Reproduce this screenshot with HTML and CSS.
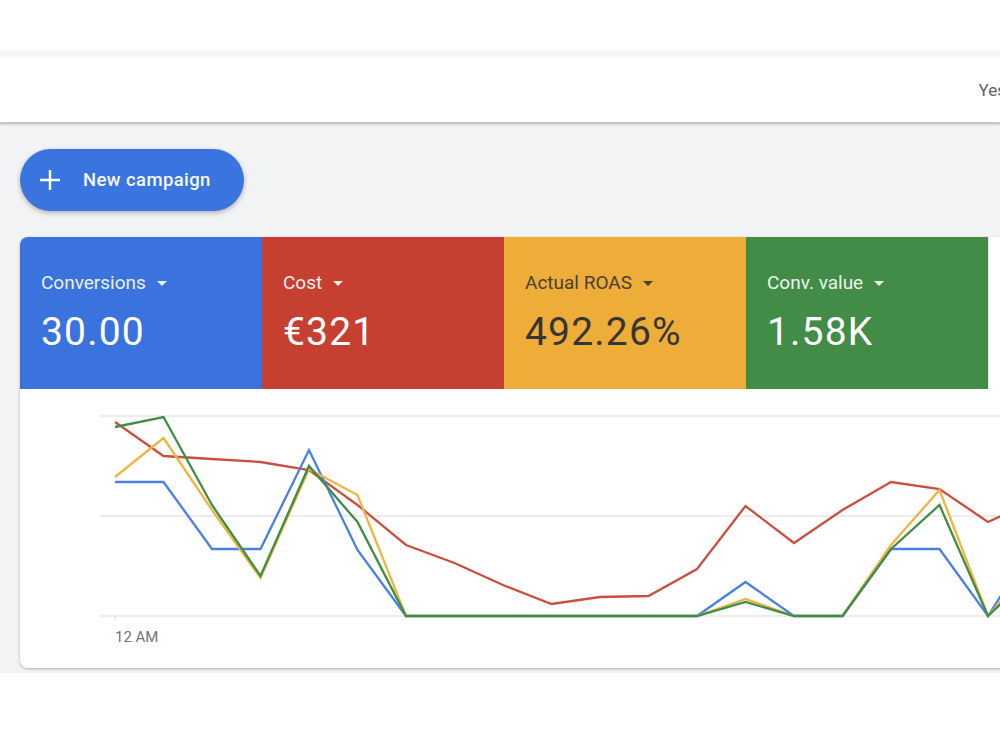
FILE: index.html
```html
<!DOCTYPE html>
<html lang="en">
<head>
<meta charset="utf-8">
<title>Overview</title>
<link rel="stylesheet" href="styles.css">
</head>
<body>
<div class="page">
  <div class="topgap"></div>
  <div class="band"></div>
  <header class="header">
    <span class="date">Yesterday</span>
  </header>
  <main class="main">
    <button class="new-btn" type="button">
      <svg class="plus" width="22" height="22" viewBox="0 0 22 22"><path d="M11 1v20M1 11h20" stroke="#fff" stroke-width="2.4" fill="none"/></svg>
      <span>New campaign</span>
    </button>
    <section class="card">
      <div class="tiles">
        <div class="tile blue">
          <div class="label">Conversions <span class="caret"></span></div>
          <div class="value">30.00</div>
        </div>
        <div class="tile red">
          <div class="label">Cost <span class="caret"></span></div>
          <div class="value">€321</div>
        </div>
        <div class="tile yellow">
          <div class="label">Actual ROAS <span class="caret"></span></div>
          <div class="value">492.26%</div>
        </div>
        <div class="tile green">
          <div class="label">Conv. value <span class="caret"></span></div>
          <div class="value">1.58K</div>
        </div>
        <div class="tile empty"></div>
      </div>
      <div class="chart">
        <svg width="1210" height="279" viewBox="20 389 1210 279">
          <g class="grid">
            <line x1="100" y1="416" x2="1230" y2="416"/>
            <line x1="100" y1="516" x2="1230" y2="516"/>
            <line x1="100" y1="616" x2="1230" y2="616"/>
            <line x1="115" y1="616" x2="115" y2="621"/>
          </g>
          <text class="axis" x="115" y="642">12 AM</text>
          <polyline class="ln red-ln" points="115,422 163.5,456 212,459 260.5,462 309,470 357.5,505 406,545 454.5,563 503,585 551.5,604 600,597 648.5,596 697,569 745.5,506 794,543 842.5,510 891,482 939.5,489 988,522 1036.5,500"/>
          <polyline class="ln blue-ln" points="115,482 163.5,482 212,549 260.5,549 309,450 357.5,550 406,616 454.5,616 503,616 551.5,616 600,616 648.5,616 697,616 745.5,582 794,616 842.5,616 891,549 939.5,549 988,616 1036.5,540"/>
          <polyline class="ln yellow-ln" points="115,477 163.5,438 212,510 260.5,578 309,469 357.5,495 406,616 454.5,616 503,616 551.5,616 600,616 648.5,616 697,616 745.5,599 794,616 842.5,616 891,545 939.5,490 988,616 1036.5,560"/>
          <polyline class="ln green-ln" points="115,427 163.5,417 212,505 260.5,576 309,466 357.5,522 406,616 454.5,616 503,616 551.5,616 600,616 648.5,616 697,616 745.5,602 794,616 842.5,616 891,549 939.5,505 988,616 1036.5,570"/>
        </svg>
      </div>
    </section>
  </main>
</div>
</body>
</html>
```

FILE: styles.css
```css
* { box-sizing: border-box; }

html, body {
  margin: 0;
  padding: 0;
  background: #ffffff;
  font-family: Roboto, "Liberation Sans", Arial, sans-serif;
  overflow: hidden;
}

.page {
  width: 1000px;
  height: 750px;
  overflow: hidden;
  background: #ffffff;
}

.topgap {
  height: 50px;
  background: #ffffff;
}

.band {
  height: 7px;
  background: linear-gradient(180deg, #fbfbfb 0%, #f3f3f3 50%, #fcfcfc 100%);
}

.header {
  height: 67px;
  display: flex;
  align-items: center;
  justify-content: flex-end;
  background: #ffffff;
  border-bottom: 2px solid #c6c6c6;
  box-shadow: 0 1px 2px rgba(0, 0, 0, 0.12);
  position: relative;
  z-index: 1;
}

.date {
  font-size: 17px;
  color: #5f6368;
  white-space: nowrap;
  margin-right: -53px;
}

.main {
  background: #f1f3f4;
  padding: 25px 0 5px 20px;
  width: 1000px;
}

.new-btn {
  display: inline-flex;
  align-items: center;
  gap: 22px;
  height: 62px;
  padding: 0 33px 0 19px;
  border: none;
  border-radius: 31px;
  background: #3a74df;
  color: #ffffff;
  font-family: Roboto, "Liberation Sans", Arial, sans-serif;
  font-size: 18.5px;
  font-weight: 500;
  letter-spacing: 0.4px;
  box-shadow: 0 2px 5px rgba(0, 0, 0, 0.28);
}

.new-btn span { opacity: 0.95; }

.plus { display: block; }

.card {
  margin-top: 26px;
  width: 1210px;
  background: #ffffff;
  border-radius: 8px;
  overflow: hidden;
  box-shadow: 0 1px 3px rgba(0, 0, 0, 0.28);
}

.tiles {
  display: flex;
  height: 152px;
}

.tile {
  width: 242px;
  flex: none;
  padding: 34px 0 0 21px;
  color: #ffffff;
}

.tile.blue { background: #3a73de; }
.tile.red { background: #c64031; }
.tile.yellow { background: #eead39; color: #353535; }
.tile.green { background: #428c47; }
.tile.empty { background: #ffffff; border-left: 1px solid #e8e8e8; }

.label {
  display: flex;
  align-items: center;
  gap: 11px;
  height: 24px;
  font-size: 19px;
  line-height: 24px;
  opacity: 0.9;
  white-space: nowrap;
}

.caret {
  width: 0;
  height: 0;
  border-left: 5.5px solid transparent;
  border-right: 5.5px solid transparent;
  border-top: 5.5px solid currentColor;
  margin-top: 1px;
}

.value {
  margin-top: 14px;
  font-size: 39px;
  line-height: 46px;
  letter-spacing: 1.2px;
  white-space: nowrap;
}

.chart {
  height: 279px;
}

.chart svg { display: block; }

.grid line {
  stroke: #e6e6e6;
  stroke-width: 1.5;
}

.axis {
  font-family: Roboto, "Liberation Sans", Arial, sans-serif;
  font-size: 15px;
  fill: #70757a;
}

.ln {
  fill: none;
  stroke-width: 2.3;
  stroke-linejoin: miter;
}

.red-ln { stroke: #c9503f; }
.blue-ln { stroke: #4a80e4; }
.yellow-ln { stroke: #f0b443; }
.green-ln { stroke: #3e8e47; }
```
